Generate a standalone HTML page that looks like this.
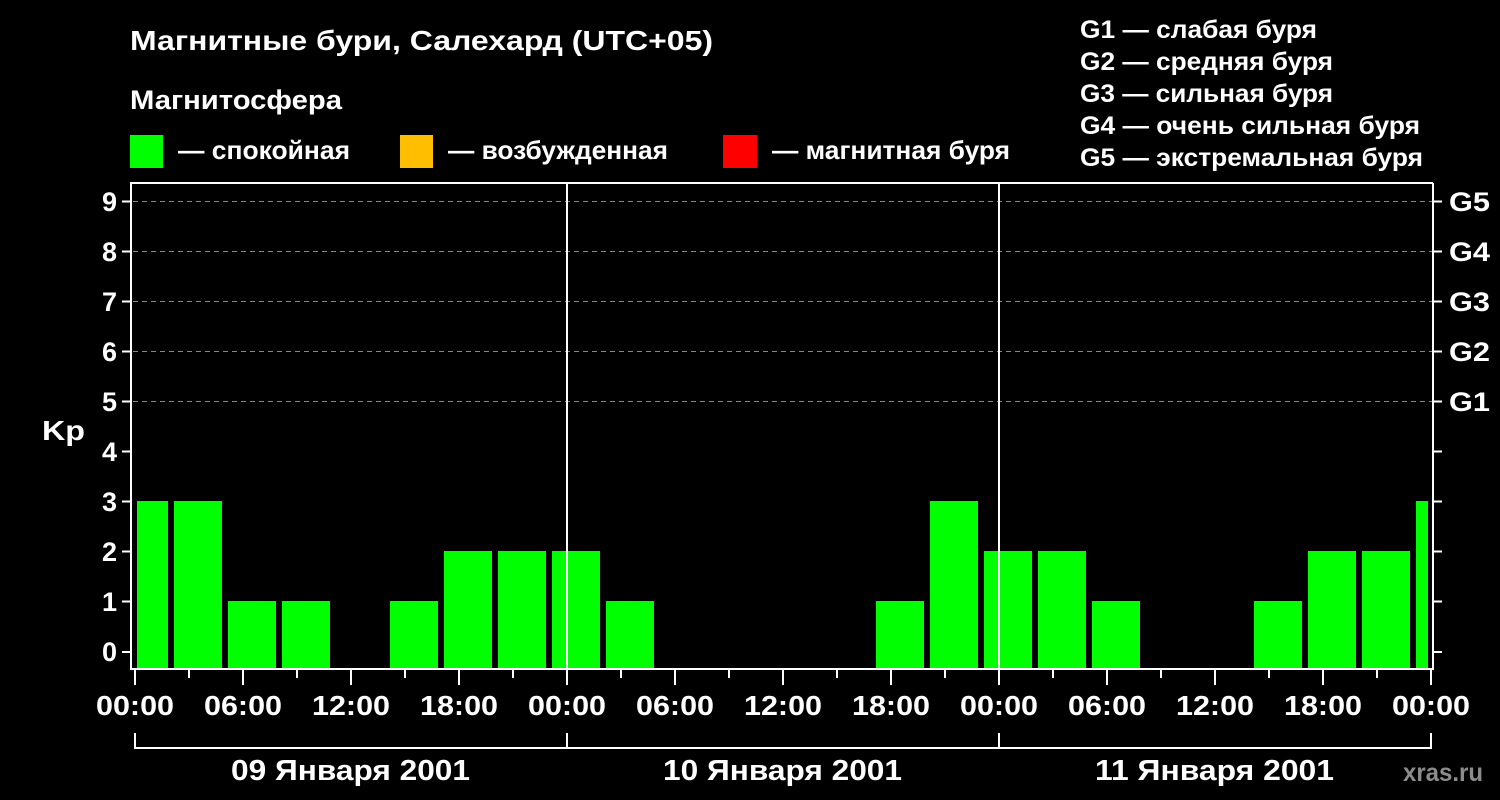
<!DOCTYPE html>
<html><head><meta charset="utf-8"><style>
html,body{margin:0;padding:0;background:#000;width:1500px;height:800px;overflow:hidden}
svg text{font-family:"Liberation Sans",sans-serif;font-weight:bold;fill:#fff}
</style></head><body>
<svg width="1500" height="800" viewBox="0 0 1500 800" xmlns="http://www.w3.org/2000/svg">
<rect width="1500" height="800" fill="#000"/>
<text x="130" y="50" font-size="28" textLength="583" lengthAdjust="spacingAndGlyphs">Магнитные бури, Салехард (UTC+05)</text>
<text x="130" y="109" font-size="27" textLength="212" lengthAdjust="spacingAndGlyphs">Магнитосфера</text>
<rect x="130" y="135" width="33" height="33" fill="#00ff00"/>
<text x="178" y="159" font-size="26" textLength="172" lengthAdjust="spacingAndGlyphs">— спокойная</text>
<rect x="400" y="135" width="33" height="33" fill="#ffbf00"/>
<text x="448" y="159" font-size="26" textLength="220" lengthAdjust="spacingAndGlyphs">— возбужденная</text>
<rect x="723" y="135" width="34" height="33" fill="#ff0000"/>
<text x="772" y="159" font-size="26" textLength="238" lengthAdjust="spacingAndGlyphs">— магнитная буря</text>
<g font-size="25">
<text x="1080" y="38" textLength="237" lengthAdjust="spacingAndGlyphs">G1 — слабая буря</text>
<text x="1080" y="70" textLength="253" lengthAdjust="spacingAndGlyphs">G2 — средняя буря</text>
<text x="1080" y="102" textLength="253" lengthAdjust="spacingAndGlyphs">G3 — сильная буря</text>
<text x="1080" y="134" textLength="340" lengthAdjust="spacingAndGlyphs">G4 — очень сильная буря</text>
<text x="1080" y="166" textLength="343" lengthAdjust="spacingAndGlyphs">G5 — экстремальная буря</text>
</g>
<g stroke="#888" stroke-width="1" stroke-dasharray="5,4">
<line x1="133" x2="1432" y1="201.5" y2="201.5"/>
<line x1="133" x2="1432" y1="251.5" y2="251.5"/>
<line x1="133" x2="1432" y1="301.5" y2="301.5"/>
<line x1="133" x2="1432" y1="351.5" y2="351.5"/>
<line x1="133" x2="1432" y1="401.5" y2="401.5"/>
</g>
<g fill="#00ff00">
<rect x="137" y="501" width="31" height="167"/>
<rect x="174" y="501" width="48" height="167"/>
<rect x="228" y="601" width="48" height="67"/>
<rect x="282" y="601" width="48" height="67"/>
<rect x="390" y="601" width="48" height="67"/>
<rect x="444" y="551" width="48" height="117"/>
<rect x="498" y="551" width="48" height="117"/>
<rect x="552" y="551" width="48" height="117"/>
<rect x="606" y="601" width="48" height="67"/>
<rect x="876" y="601" width="48" height="67"/>
<rect x="930" y="501" width="48" height="167"/>
<rect x="984" y="551" width="48" height="117"/>
<rect x="1038" y="551" width="48" height="117"/>
<rect x="1092" y="601" width="48" height="67"/>
<rect x="1254" y="601" width="48" height="67"/>
<rect x="1308" y="551" width="48" height="117"/>
<rect x="1362" y="551" width="48" height="117"/>
<rect x="1416" y="501" width="12" height="167"/>
</g>
<g stroke="#fff" stroke-width="2" fill="none">
<polyline points="1433,183 131,183 131,669 1433,669 1433,183"/>
<line x1="567" y1="183" x2="567" y2="669"/>
<line x1="999" y1="183" x2="999" y2="669"/>
<path d="M122 201.5h9M122 251.5h9M122 301.5h9M122 351.5h9M122 401.5h9M122 451.5h9M122 501.5h9M122 551.5h9M122 601.5h9M122 652h9"/>
<path d="M1433 201.5h9M1433 251.5h9M1433 301.5h9M1433 351.5h9M1433 401.5h9M1433 451.5h9M1433 501.5h9M1433 551.5h9M1433 601.5h9M1433 652h9"/>
<path d="M135 669v16M243 669v16M351 669v16M459 669v16M567 669v16M675 669v16M783 669v16M891 669v16M999 669v16M1107 669v16M1215 669v16M1323 669v16M1431 669v16"/>
<path d="M189 669v9M297 669v9M405 669v9M513 669v9M621 669v9M729 669v9M837 669v9M945 669v9M1053 669v9M1161 669v9M1269 669v9M1377 669v9"/>
<path d="M135 733v15H1431V733M567 733v15M999 733v15"/>
</g>
<g font-size="27" text-anchor="end">
<text x="117" y="211">9</text><text x="117" y="261">8</text><text x="117" y="311">7</text>
<text x="117" y="361">6</text><text x="117" y="411">5</text><text x="117" y="461">4</text>
<text x="117" y="511">3</text><text x="117" y="561">2</text><text x="117" y="611">1</text>
<text x="117" y="661">0</text>
</g>
<text x="42" y="440" font-size="28" textLength="43" lengthAdjust="spacingAndGlyphs">Kp</text>
<g font-size="27">
<text x="1449" y="211" textLength="41" lengthAdjust="spacingAndGlyphs">G5</text>
<text x="1449" y="261" textLength="41" lengthAdjust="spacingAndGlyphs">G4</text>
<text x="1449" y="311" textLength="41" lengthAdjust="spacingAndGlyphs">G3</text>
<text x="1449" y="361" textLength="41" lengthAdjust="spacingAndGlyphs">G2</text>
<text x="1449" y="411" textLength="41" lengthAdjust="spacingAndGlyphs">G1</text>
</g>
<g font-size="28">
<text x="96" y="715" textLength="78" lengthAdjust="spacingAndGlyphs">00:00</text>
<text x="204" y="715" textLength="78" lengthAdjust="spacingAndGlyphs">06:00</text>
<text x="312" y="715" textLength="78" lengthAdjust="spacingAndGlyphs">12:00</text>
<text x="420" y="715" textLength="78" lengthAdjust="spacingAndGlyphs">18:00</text>
<text x="528" y="715" textLength="78" lengthAdjust="spacingAndGlyphs">00:00</text>
<text x="636" y="715" textLength="78" lengthAdjust="spacingAndGlyphs">06:00</text>
<text x="744" y="715" textLength="78" lengthAdjust="spacingAndGlyphs">12:00</text>
<text x="852" y="715" textLength="78" lengthAdjust="spacingAndGlyphs">18:00</text>
<text x="960" y="715" textLength="78" lengthAdjust="spacingAndGlyphs">00:00</text>
<text x="1068" y="715" textLength="78" lengthAdjust="spacingAndGlyphs">06:00</text>
<text x="1176" y="715" textLength="78" lengthAdjust="spacingAndGlyphs">12:00</text>
<text x="1284" y="715" textLength="78" lengthAdjust="spacingAndGlyphs">18:00</text>
<text x="1392" y="715" textLength="78" lengthAdjust="spacingAndGlyphs">00:00</text>
</g>
<g font-size="29">
<text x="231" y="780" textLength="239" lengthAdjust="spacingAndGlyphs">09 Января 2001</text>
<text x="663" y="780" textLength="239" lengthAdjust="spacingAndGlyphs">10 Января 2001</text>
<text x="1095" y="780" textLength="239" lengthAdjust="spacingAndGlyphs">11 Января 2001</text>
</g>
<text x="1403" y="781" font-size="25" style="fill:#8c8c8c" textLength="80" lengthAdjust="spacingAndGlyphs">xras.ru</text>
</svg>
</body></html>
